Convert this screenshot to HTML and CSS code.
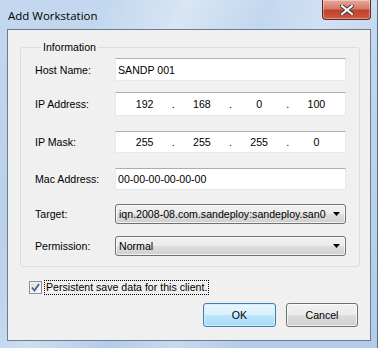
FILE: index.html
```html
<!DOCTYPE html>
<html lang="en">
<head>
    <meta charset="UTF-8">
    <title>Add Workstation</title>
    <link rel="stylesheet" href="styles.css">
</head>
<body>
    <div class="window">
        <div class="titlebar">
            <span class="title">Add Workstation</span>
            <div class="close-btn">
                <svg width="14" height="10" viewBox="0 0 14 10">
                    <path d="M2 1 L12 9 M12 1 L2 9" stroke="#3a3a3a" stroke-width="4" stroke-linecap="square"/>
                    <path d="M2 1 L12 9 M12 1 L2 9" stroke="#ffffff" stroke-width="2" stroke-linecap="square"/>
                </svg>
            </div>
        </div>

        <div class="client">
            <fieldset class="group">
                <legend>Information</legend>

                <div class="field">
                    <label>Host Name:</label>
                    <div class="textbox">SANDP 001</div>
                </div>

                <div class="field">
                    <label>IP Address:</label>
                    <div class="textbox ip">
                        <span class="octet">192</span><span class="dot">.</span>
                        <span class="octet">168</span><span class="dot">.</span>
                        <span class="octet">0</span><span class="dot">.</span>
                        <span class="octet">100</span>
                    </div>
                </div>

                <div class="field">
                    <label>IP Mask:</label>
                    <div class="textbox ip">
                        <span class="octet">255</span><span class="dot">.</span>
                        <span class="octet">255</span><span class="dot">.</span>
                        <span class="octet">255</span><span class="dot">.</span>
                        <span class="octet">0</span>
                    </div>
                </div>

                <div class="field">
                    <label>Mac Address:</label>
                    <div class="textbox">00-00-00-00-00-00</div>
                </div>

                <div class="field">
                    <label>Target:</label>
                    <div class="combo">
                        <span class="combo-text">iqn.2008-08.com.sandeploy:sandeploy.san0</span>
                        <svg class="arrow" width="7" height="4" viewBox="0 0 7 4"><path d="M0 0 H7 L3.5 4 Z" fill="#000"/></svg>
                    </div>
                </div>

                <div class="field">
                    <label>Permission:</label>
                    <div class="combo">
                        <span class="combo-text">Normal</span>
                        <svg class="arrow" width="7" height="4" viewBox="0 0 7 4"><path d="M0 0 H7 L3.5 4 Z" fill="#000"/></svg>
                    </div>
                </div>
            </fieldset>

            <div class="check-row">
                <span class="checkbox">
                    <svg width="9" height="9" viewBox="0 0 9 9">
                        <path d="M1 4.5 L3.5 7.5 L8 1" stroke="#4a5e96" stroke-width="1.8" fill="none"/>
                    </svg>
                </span>
                <span class="check-label">Persistent save data for this client.</span>
            </div>

            <div class="buttons">
                <button class="btn btn-default">OK</button>
                <button class="btn">Cancel</button>
            </div>
        </div>
    </div>
</body>
</html>
```

FILE: styles.css
```css
body {
    margin: 0;
    font-family: "Liberation Sans", Arial, sans-serif;
    font-size: 10.6px;
    color: #000;
}
.window {
    width: 378px;
    height: 348px;
    box-sizing: border-box;
    padding: 0 7px 7px 7px;
    background:
        linear-gradient(115deg, rgba(255,255,255,0) 20%, rgba(255,255,255,0.35) 35%, rgba(255,255,255,0) 50%, rgba(255,255,255,0.25) 62%, rgba(255,255,255,0) 75%),
        linear-gradient(to bottom, #c3d8ef, #b4cce8);
    border-right: 1px solid #5d6f86;
    display: flex;
    flex-direction: column;
}
.titlebar {
    height: 29px;
    display: flex;
    align-items: flex-start;
    justify-content: space-between;
}
.title {
    font-family: "Open Sans", "DejaVu Sans", sans-serif;
    font-size: 11.5px;
    margin-top: 8px;
    margin-left: 1px;
}
.close-btn {
    width: 47px;
    height: 19px;
    margin-right: -1px;
    border: 1px solid #5a2a24;
    border-top: none;
    border-radius: 0 0 4px 4px;
    background: linear-gradient(to bottom, #e8a89b 0%, #d57a68 45%, #c2412c 55%, #cf5a3e 100%);
    box-shadow: inset 0 0 0 1px rgba(255,255,255,0.35);
    display: flex;
    align-items: center;
    justify-content: center;
}
.client {
    width: 364px;
    height: 312px;
    box-sizing: border-box;
    border: 1px solid #6b7c91;
    background-color: #f0f0f0;
    display: flex;
    flex-direction: column;
}
.group {
    width: 340px;
    box-sizing: border-box;
    margin: 11px 0 0 12px;
    padding: 0 0 10px 14px;
    border: 1px solid #d5dfe5;
    border-radius: 3px;
    min-width: 0;
}
.group legend {
    padding: 0 2px;
    margin-left: 6px;
    line-height: 13px;
}
.field {
    display: flex;
    align-items: center;
}
.field label {
    width: 80px;
    flex-shrink: 0;
}
.field:nth-child(2) { margin-top: 4px; height: 23px; }
.field:nth-child(3) { margin-top: 11px; height: 24px; }
.field:nth-child(4) { margin-top: 15px; height: 22px; }
.field:nth-child(5) { margin-top: 15px; height: 22px; }
.field:nth-child(6) { margin-top: 14px; height: 20px; }
.field:nth-child(7) { margin-top: 12px; height: 20px; }

.textbox {
    width: 231px;
    height: 100%;
    box-sizing: border-box;
    background: #fff;
    border: 1px solid #e3e9ef;
    border-top-color: #abadb3;
    padding-left: 2px;
    display: flex;
    align-items: center;
}
.ip {
    padding: 0 2px;
}
.octet {
    flex: 1;
    text-align: center;
}
.dot {
    width: 4px;
    text-align: center;
}
.combo {
    width: 231px;
    height: 100%;
    box-sizing: border-box;
    border: 1px solid #707070;
    border-radius: 3px;
    background: linear-gradient(to bottom, #f2f2f2 0%, #ebebeb 50%, #dddddd 51%, #cfcfcf 100%);
    box-shadow: inset 0 0 0 1px rgba(255,255,255,0.7);
    display: flex;
    align-items: center;
    padding: 0 5px 0 3px;
}
.combo-text {
    flex: 1;
    white-space: nowrap;
    overflow: hidden;
}
.arrow {
    margin-left: 3px;
}
.check-row {
    display: flex;
    align-items: center;
    margin: 13px 0 0 21px;
    height: 14px;
}
.checkbox {
    width: 13px;
    height: 13px;
    box-sizing: border-box;
    border: 1px solid #8e8f8f;
    background: linear-gradient(135deg, #dcdcdc, #fbfbfb);
    box-shadow: inset 0 0 0 1px #f4f4f4;
    display: flex;
    align-items: center;
    justify-content: center;
}
.check-label {
    margin-left: 3px;
    padding: 0 1px;
    line-height: 13px;
    outline: 1px dotted #000;
}
.buttons {
    display: flex;
    justify-content: flex-end;
    gap: 10px;
    margin: 9px 12px 0 0;
}
.btn {
    width: 72px;
    height: 24px;
    font-family: inherit;
    font-size: 10.6px;
    color: #000;
    border: 1px solid #707070;
    border-radius: 3px;
    background: linear-gradient(to bottom, #f2f2f2 0%, #ebebeb 50%, #dddddd 51%, #cfcfcf 100%);
    box-shadow: inset 0 0 0 1px rgba(255,255,255,0.7);
    padding: 0;
}
.btn-default {
    width: 73px;
    border-color: #3c7fb1;
    background: linear-gradient(to bottom, #eaf6fd 0%, #d9f0fc 50%, #bee6fd 51%, #a7d9f5 100%);
    box-shadow: inset 0 0 0 1px #d4effc;
}
```
